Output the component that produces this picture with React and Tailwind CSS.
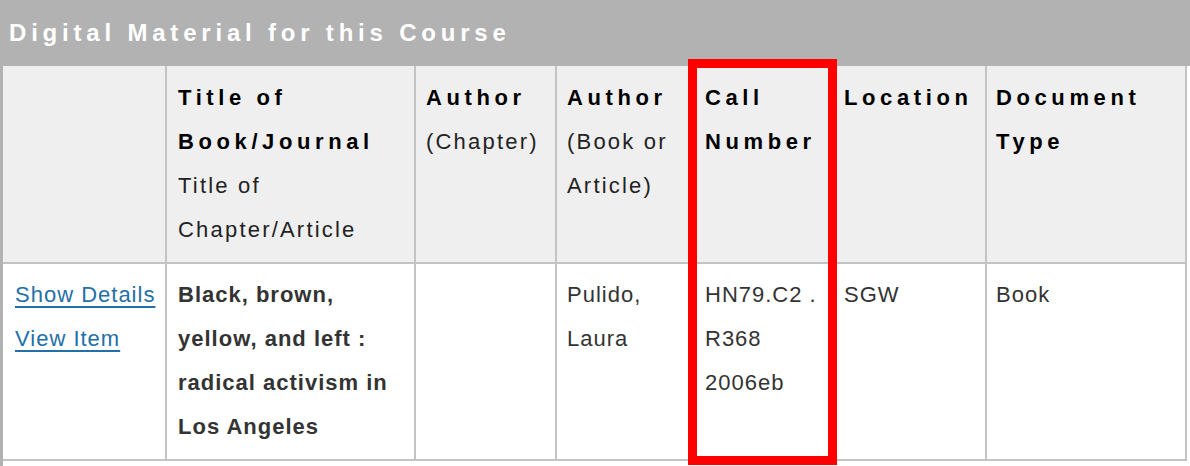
import React from 'react';

// column widths measured off the course page (border included)
const cols = [
  { w: 'w-[164px]', pad: 'pl-[12px] pr-1' },
  { w: 'w-[249px]', pad: 'pl-[11px] pr-[10px]' },
  { w: 'w-[141px]', pad: 'pl-[10px] pr-1' },
  { w: 'w-[137px]', pad: 'pl-[10px] pr-2' },
  { w: 'w-[140px]', pad: 'pl-[11px] pr-2' },
  { w: 'w-[153px]', pad: 'pl-[10px] pr-1' },
  { w: 'w-[200px]', pad: 'pl-[9px] pr-2' },
];

const Head = ({ children }) => (
  <span className="block font-bold text-black tracking-[4.6px]">{children}</span>
);

const Sub = ({ children }) => (
  <span className="block font-normal text-[#222] tracking-[2.2px]">{children}</span>
);

const Cell = ({ i, header, children }) => (
  <div
    className={`${cols[i].w} ${cols[i].pad} shrink-0 border-r-2 border-b-2 border-[#c3c3c3] ${
      header ? 'bg-[#efefef] pt-[10px] pb-[10px]' : 'bg-white pt-[9px] pb-[10px]'
    }`}
  >
    {children}
  </div>
);

const App = () => {
  return (
    <div className="relative w-[1190px] h-[466px] overflow-hidden bg-white border-l-[3px] border-[#b2b2b2] font-['Liberation_Sans',Arial,sans-serif] text-[22px] leading-[44px]">
      {/* Section title */}
      <div className="h-[66px] -ml-[3px] pl-[9px] pt-[19px] bg-[#b2b2b2]">
        <h2 className="text-[24px] leading-[28px] font-bold text-white tracking-[4.8px]">
          Digital Material for this Course
        </h2>
      </div>

      {/* Header row */}
      <div className="flex">
        <Cell i={0} header />
        <Cell i={1} header>
          <Head>Title of Book/Journal</Head>
          <Sub>Title of Chapter/Article</Sub>
        </Cell>
        <Cell i={2} header>
          <Head>Author</Head>
          <Sub>(Chapter)</Sub>
        </Cell>
        <Cell i={3} header>
          <Head>Author</Head>
          <Sub>(Book or Article)</Sub>
        </Cell>
        <Cell i={4} header>
          <Head>Call Number</Head>
        </Cell>
        <Cell i={5} header>
          <Head>Location</Head>
        </Cell>
        <Cell i={6} header>
          <Head>Document Type</Head>
        </Cell>
      </div>

      {/* Item row */}
      <div className="flex text-[#333] tracking-[1px]">
        <Cell i={0}>
          <a href="#" className="block text-[#236fa8] underline underline-offset-[4px]">Show Details</a>
          <a href="#" className="block text-[#236fa8] underline underline-offset-[4px]">View Item</a>
        </Cell>
        <Cell i={1}>
          <span className="font-bold">Black, brown, yellow, and left : radical activism in Los Angeles</span>
        </Cell>
        <Cell i={2} />
        <Cell i={3}>Pulido, Laura</Cell>
        <Cell i={4}>HN79.C2 . R368 2006eb</Cell>
        <Cell i={5}>SGW</Cell>
        <Cell i={6}>Book</Cell>
      </div>

      {/* highlight annotation around the call number column */}
      <div className="absolute left-[685px] top-[59px] w-[149px] h-[406px] border-[9px] border-[#ff0000] pointer-events-none" />
    </div>
  );
};

export default App;
